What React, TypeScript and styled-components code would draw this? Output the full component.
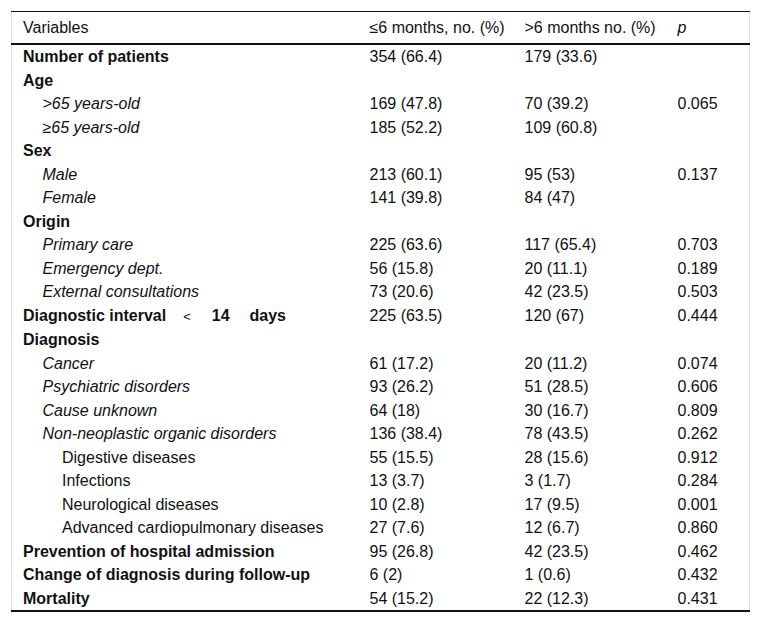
import styled, { createGlobalStyle } from "styled-components";

type Row = {
    label: string;
    a?: string;
    b?: string;
    p?: string;
    level?: 0 | 1 | 2;
    bold?: boolean;
    italic?: boolean;
    interval?: boolean;
};

const rows: Row[] = [
    { label: "Number of patients", a: "354 (66.4)", b: "179 (33.6)", bold: true },
    { label: "Age", bold: true },
    { label: ">65 years-old", a: "169 (47.8)", b: "70 (39.2)", p: "0.065", level: 1, italic: true },
    { label: "≥65 years-old", a: "185 (52.2)", b: "109 (60.8)", level: 1, italic: true },
    { label: "Sex", bold: true },
    { label: "Male", a: "213 (60.1)", b: "95 (53)", p: "0.137", level: 1, italic: true },
    { label: "Female", a: "141 (39.8)", b: "84 (47)", level: 1, italic: true },
    { label: "Origin", bold: true },
    { label: "Primary care", a: "225 (63.6)", b: "117 (65.4)", p: "0.703", level: 1, italic: true },
    { label: "Emergency dept.", a: "56 (15.8)", b: "20 (11.1)", p: "0.189", level: 1, italic: true },
    { label: "External consultations", a: "73 (20.6)", b: "42 (23.5)", p: "0.503", level: 1, italic: true },
    { label: "Diagnostic interval", a: "225 (63.5)", b: "120 (67)", p: "0.444", bold: true, interval: true },
    { label: "Diagnosis", bold: true },
    { label: "Cancer", a: "61 (17.2)", b: "20 (11.2)", p: "0.074", level: 1, italic: true },
    { label: "Psychiatric disorders", a: "93 (26.2)", b: "51 (28.5)", p: "0.606", level: 1, italic: true },
    { label: "Cause unknown", a: "64 (18)", b: "30 (16.7)", p: "0.809", level: 1, italic: true },
    { label: "Non-neoplastic organic disorders", a: "136 (38.4)", b: "78 (43.5)", p: "0.262", level: 1, italic: true },
    { label: "Digestive diseases", a: "55 (15.5)", b: "28 (15.6)", p: "0.912", level: 2 },
    { label: "Infections", a: "13 (3.7)", b: "3 (1.7)", p: "0.284", level: 2 },
    { label: "Neurological diseases", a: "10 (2.8)", b: "17 (9.5)", p: "0.001", level: 2 },
    { label: "Advanced cardiopulmonary diseases", a: "27 (7.6)", b: "12 (6.7)", p: "0.860", level: 2 },
    { label: "Prevention of hospital admission", a: "95 (26.8)", b: "42 (23.5)", p: "0.462", bold: true },
    { label: "Change of diagnosis during follow-up", a: "6 (2)", b: "1 (0.6)", p: "0.432", bold: true },
    { label: "Mortality", a: "54 (15.2)", b: "22 (12.3)", p: "0.431", bold: true },
];

const App = () => {
    return (
        <>
            <GlobalStyle />
            <Table>
                <colgroup>
                    <col style={{ width: 347 }} />
                    <col style={{ width: 155 }} />
                    <col style={{ width: 153 }} />
                    <col />
                </colgroup>
                <thead>
                    <tr>
                        <Th>Variables</Th>
                        <Th>≤6 months, no. (%)</Th>
                        <Th>&gt;6 months no. (%)</Th>
                        <Th>
                            <i>p</i>
                        </Th>
                    </tr>
                </thead>
                <tbody>
                    {rows.map((row, index) => (
                        <tr key={index}>
                            <Label $level={row.level ?? 0} $bold={!!row.bold} $italic={!!row.italic}>
                                {row.label}
                                {row.interval && (
                                    <>
                                        <Lt>&lt;</Lt>
                                        <Gap>14</Gap>
                                        <Gap>days</Gap>
                                    </>
                                )}
                            </Label>
                            <Td>{row.a}</Td>
                            <Td>{row.b}</Td>
                            <Td>{row.p}</Td>
                        </tr>
                    ))}
                </tbody>
            </Table>
        </>
    );
};

const GlobalStyle = createGlobalStyle`
    html, body {
        margin: 0;
        padding: 0;
        background: #fff;
    }
    body {
        font-family: "Liberation Sans", Arial, sans-serif;
        color: #111;
    }
`;

const Table = styled.table`
    margin: 11px 0 0 11px;
    width: 739px;
    border-collapse: collapse;
    table-layout: fixed;
    font-size: 16px;
    border-left: 1px solid #e2e2e2;
    border-right: 1px solid #e2e2e2;
    border-bottom: 2px solid #111;

    thead tr {
        border-top: 1px solid #111;
        border-bottom: 2px solid #111;
    }
`;

const Th = styled.th`
    text-align: left;
    font-weight: normal;
    padding: 6px 11px;
    line-height: 19px;
    white-space: nowrap;
`;

const Td = styled.td`
    padding: 0 11px;
    line-height: 23.5px;
    white-space: nowrap;
`;

const Label = styled(Td)<{ $level: number; $bold: boolean; $italic: boolean }>`
    padding-left: ${(props) => 11 + props.$level * 19.5}px;
    font-weight: ${(props) => (props.$bold ? "bold" : "normal")};
    font-style: ${(props) => (props.$italic ? "italic" : "normal")};
`;

const Lt = styled.span`
    font-weight: normal;
    font-size: 13px;
    margin: 0 21px 0 17px;
`;

const Gap = styled.span`
    margin-right: 20px;
`;

export default App;
